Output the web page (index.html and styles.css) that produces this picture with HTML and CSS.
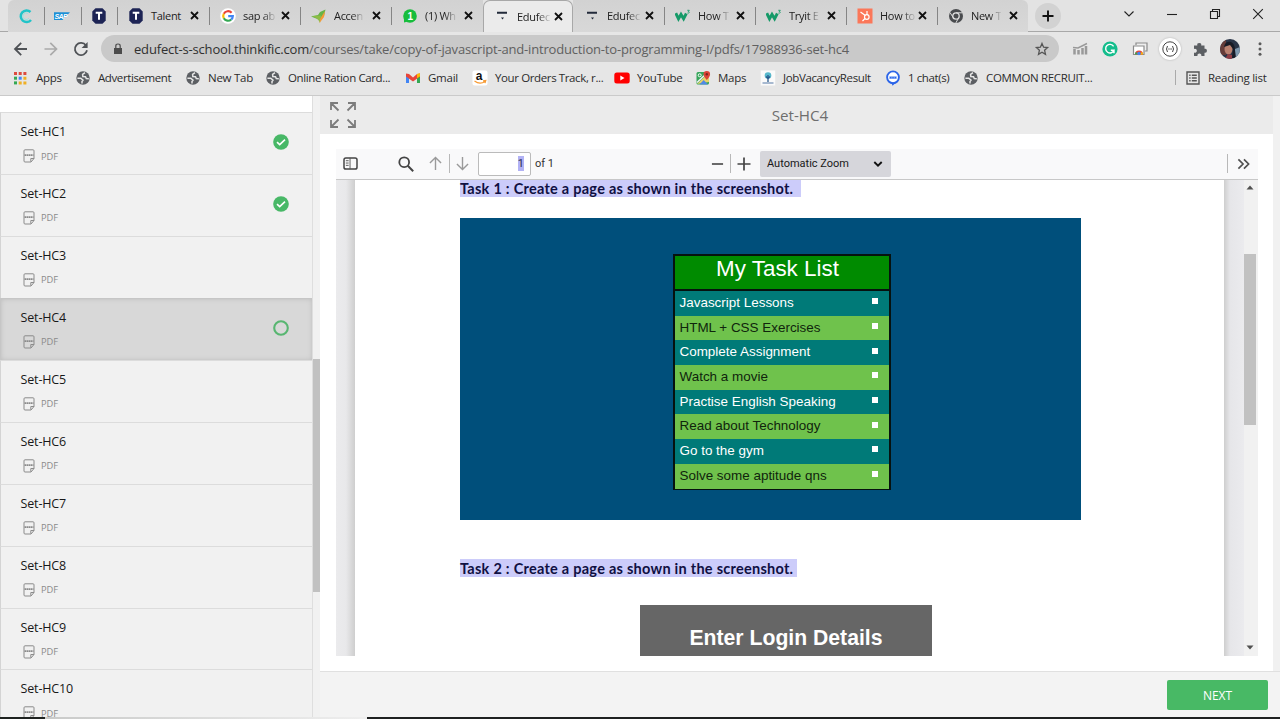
FILE: index.html
```html
<!DOCTYPE html>
<html lang="en">
<head>
<meta charset="utf-8">
<title>Set-HC4</title>
<link rel="stylesheet" href="styles.css">
</head>
<body>
<svg width="0" height="0" class="defs">
  <defs>
    <symbol id="x" viewBox="0 0 9 9"><path d="M1 1l7 7M8 1L1 8" stroke="#111" stroke-width="1.8" fill="none"/></symbol>
    <symbol id="globe" viewBox="0 0 16 16"><circle cx="8" cy="8" r="6.700" fill="#5c5f63"/><path d="M2.400 8.200h3.300l2.300 2-1 1.300v2M10 2.600L7.600 4.300l.2 2.300 2.700.2.800 1.800 2.500.2" stroke="#e6e6e6" stroke-width="1.500" fill="none"/></symbol>
    <symbol id="hex" viewBox="0 0 16 16"><path d="M4.500.300h7l3.200 3.200v9l-3.200 3.200h-7L1.300 12.500v-9z" fill="#1d2455"/><path d="M4.700 4.700h6.600M8 4.700v7" stroke="#fff" stroke-width="2" fill="none"/></symbol>
    <symbol id="think" viewBox="0 0 16 16"><path d="M3 3.800h10v2H3zM7 9.500h3l-1.500 2z" fill="#222a3a"/></symbol>
    <symbol id="w3" viewBox="0 0 16 16"><path d="M.8 5.200l2.700 5.600 2.500-4.400 2.600 4.400L11.300 5.500" stroke="#159a68" stroke-width="2.900" fill="none"/><path d="M12.300 2.300h2l-1 1.200c1.600 0 1.300 2-.9 1.600" stroke="#159a68" stroke-width=".9" fill="none"/></symbol>
    <symbol id="doc" viewBox="0 0 12 14"><path d="M2 .8h8q1 0 1 1V9.500L8 13H2q-1 0-1-1V1.800q0-1 1-1zM7.800 12.600V9.500H11" stroke="#8b8b8b" fill="none"/><path d="M1.500 6.200h9" stroke="#8b8b8b" stroke-width="1.800" stroke-dasharray="1.600 .4"/></symbol>
    <symbol id="done" viewBox="0 0 16 16"><circle cx="8" cy="8" r="7.800" fill="#48b867"/><path d="M4 8.200l2.700 2.500L12 5.600" stroke="#fff" stroke-width="1.600" fill="none"/></symbol>
  </defs>
</svg>
<div class="window">
  <header class="chrome">
    <div class="tabs">
      <div class="tab mini"><svg viewBox="0 0 16 16"><path d="M12.500 4A5.800 5.800 0 1 0 13 12" stroke="#21c4c8" stroke-width="2.500" fill="none"/><path d="M10 5.500A3.300 3.300 0 1 0 11 10" stroke="#9be3e2" stroke-width="1" fill="none"/></svg></div>
      <div class="tab mini"><svg viewBox="0 0 16 16"><path d="M0 4.200h16L8.500 12H0z" fill="#1c8fd6"/><text x=".4" y="10.500" class="sap">SAP</text></svg></div>
      <div class="tab mini"><svg viewBox="0 0 16 16"><use href="#hex"/></svg></div>
      <div class="tab"><svg><use href="#hex"/></svg><span class="whole">Talent</span><svg class="close"><use href="#x"/></svg></div>
      <div class="tab"><svg viewBox="0 0 16 16"><circle cx="8" cy="8" r="7.800" fill="#fff"/><g fill="none" stroke-width="2.200"><path d="M11.600 4.800A4.800 4.800 0 0 0 3.800 5.700" stroke="#e94235"/><path d="M3.800 5.700a4.800 4.800 0 0 0 0 4.600" stroke="#fabb05"/><path d="M3.800 10.300a4.800 4.800 0 0 0 7.400 1.200" stroke="#34a853"/><path d="M11.200 11.500A4.600 4.600 0 0 0 12.800 8.200H8.200" stroke="#4285f4"/></g></svg><span>sap ab</span><svg class="close"><use href="#x"/></svg></div>
      <div class="tab"><svg viewBox="0 0 16 16"><path d="M0 8.500L7 7l2-3 5.500-2.500L13 8l-4 4z" fill="#66b447"/><path d="M1 8l9-.5-1 7.500c-1-3-3-5-8-7z" fill="#8ebc45"/><path d="M14 3l-1 6-4.500 6 1-5z" fill="#f59a35"/></svg><span>Accen</span><svg class="close"><use href="#x"/></svg></div>
      <div class="tab"><svg viewBox="0 0 16 16"><circle cx="8" cy="8" r="6.800" fill="#16bd3c"/><path d="M2 10v4.500l4-1" fill="#16bd3c"/><text x="5.500" y="11.500" class="one">1</text></svg><span>(1) Wh</span><svg class="close"><use href="#x"/></svg></div>
      <div class="tab active"><svg><use href="#think"/></svg><span>Edufec</span><svg class="close"><use href="#x"/></svg></div>
      <div class="tab nosep"><svg><use href="#think"/></svg><span>Edufec</span><svg class="close"><use href="#x"/></svg></div>
      <div class="tab"><svg><use href="#w3"/></svg><span>How T</span><svg class="close"><use href="#x"/></svg></div>
      <div class="tab"><svg><use href="#w3"/></svg><span>Tryit E</span><svg class="close"><use href="#x"/></svg></div>
      <div class="tab"><svg viewBox="0 0 16 16"><path d="M.5.500h15v15H.5z" fill="#fb7759"/><g stroke="#fff" fill="none" stroke-width="1.200"><circle cx="9.800" cy="9" r="2.300"/><path d="M10 3v4M3.500 4l4.800 3.600M8 10.500L5.500 13"/></g></svg><span>How to</span><svg class="close"><use href="#x"/></svg></div>
      <div class="tab last"><svg viewBox="0 0 16 16"><circle cx="8" cy="8" r="7" fill="#494b4e"/><circle cx="8" cy="8" r="3.200" fill="#494b4e" stroke="#ddd" stroke-width="1.300"/><path d="M8 4.800h6.500M5.200 9.600L2 4.500M10.700 9.700L7.800 15" stroke="#ddd"/></svg><span>New T</span><svg class="close"><use href="#x"/></svg></div>
      <div class="plus"><svg viewBox="0 0 12 12"><path d="M6 .5v11M.5 6h11" stroke="#111" stroke-width="1.900"/></svg></div>
      <div class="controls">
        <svg viewBox="0 0 12 12"><path d="M1.500 3.500L6 8l4.500-4.500" /></svg>
        <svg viewBox="0 0 12 12"><path d="M1 6.500h10" /></svg>
        <svg viewBox="0 0 12 12"><path d="M1.500 3.500h7v7h-7zM3.500 3.500v-2h7v7h-2" /></svg>
        <svg viewBox="0 0 12 12"><path d="M1.200 1.200l9.600 9.600M10.800 1.200l-9.600 9.600" /></svg>
      </div>
    </div>
    <div class="toolbar">
      <div class="nav">
        <svg viewBox="0 0 16 16"><path d="M14 8H2M8.200 1.800L2 8l6.200 6.200" stroke="#4f5256" stroke-width="1.800" fill="none"/></svg>
        <svg viewBox="0 0 16 16"><path d="M1.500 8h12M7.300 1.800L13.500 8l-6.200 6.200" stroke="#aaa" stroke-width="1.700" fill="none"/></svg>
        <svg viewBox="0 0 16 16"><path d="M13 4.500A6.100 6.100 0 1 0 14 9.300" stroke="#4f5256" stroke-width="1.800" fill="none"/><path d="M14.600 1v6h-6z" fill="#4f5256"/></svg>
      </div>
      <div class="omnibox">
        <svg class="lock" viewBox="0 0 10 12"><path d="M1 5h8v6H1z" fill="#4b4b4b"/><path d="M2.800 5V3q0-2 2.200-2t2.200 2v2" stroke="#4b4b4b" stroke-width="1.200" fill="none"/></svg>
        <span class="url"><b>edufect-s-school.thinkific.com</b>/courses/take/copy-of-javascript-and-introduction-to-programming-I/pdfs/17988936-set-hc4</span>
        <svg class="star" viewBox="0 0 14 14"><path d="M7 1.500l1.600 3.700 4 .4-3 2.700.9 4L7 10.200l-3.500 2.100.9-4-3-2.700 4-.4z" stroke="#555" stroke-width="1.300" fill="none"/></svg>
      </div>
      <div class="ext">
        <svg viewBox="0 0 16 16"><path d="M2.500 8v5.500M6.500 9v4.500M10.500 7v6.500M14 5v8.500" stroke="#999" stroke-width="2.500"/><path d="M1 6.500l5 .5 9-4.500" stroke="#999" stroke-width="1.500" fill="none"/></svg>
        <svg viewBox="0 0 16 16"><circle cx="8" cy="8" r="7.600" fill="#14bd8c"/><path d="M11.600 5.300A4.300 4.300 0 1 0 12 9.200H8.800M12 9.200v3" stroke="#fff" stroke-width="1.400" fill="none"/></svg>
        <svg viewBox="0 0 16 16"><path d="M4 4V2h11v8h-2" stroke="#8b8b8b" stroke-width="1.200" fill="#eee"/><path d="M1.500 5h10.500v8.500H1.500z" stroke="#8b8b8b" stroke-width="1.200" fill="#fff"/><path d="M3 13.500a4 4 0 0 1 8 0z" fill="#e64b3c"/><path d="M3 13.500a4 4 0 0 1 1-2.700l2 2.700z" fill="#35a853"/><path d="M8 13.500l2-2.700a4 4 0 0 1 1 2.700z" fill="#fbbc05"/><circle cx="7" cy="12.500" r="1.700" fill="#4285f4"/></svg>
        <i class="halo"><svg viewBox="0 0 16 16"><circle cx="8" cy="8" r="7.200" stroke="#444" fill="none"/><path d="M5.500 5q-2 3 0 6M10.500 5q2 3 0 6" stroke="#444" fill="none"/><path d="M6.300 8h3.600" stroke="#444" stroke-dasharray="1 .3"/></svg></i>
        <svg viewBox="0 0 16 16"><path d="M2 4.500h3.300a2 2 0 1 1 3.900 0h3.300v3.300a2 2 0 1 1 0 3.900V15H9.300a2 2 0 1 0-3.800 0H2v-3.500a2 2 0 1 0 0-3.600z" fill="#5c5f63"/></svg>
        <svg class="avatar" viewBox="0 0 20 20"><defs><clipPath id="c"><circle cx="10" cy="10" r="10"/></clipPath></defs><g clip-path="url(#c)"><path d="M0 0h20v20H0z" fill="#293447"/><path d="M0 0h6v16H0z" fill="#653c39"/><path d="M15 10l5-2v12h-7z" fill="#7d98ae"/><ellipse cx="8.500" cy="10" rx="4" ry="5.500" fill="#b9806f"/><path d="M4 8Q5 2 11 3q4 2 4 8l1 8h-4l1-9-3-4z" fill="#171b26"/><path d="M5 20l3-5 4 1v4z" fill="#913d45"/></g></svg>
        <svg class="dots" viewBox="0 0 4 16"><g fill="#5a5a5a"><circle cx="2" cy="2.800" r="1.500"/><circle cx="2" cy="8" r="1.500"/><circle cx="2" cy="13.200" r="1.500"/></g></svg>
      </div>
    </div>
    <div class="bookmarks">
      <div class="bm"><svg viewBox="0 0 16 16"><path d="M2 2h3v3H2zM6.700 2h3v3h-3zM11.400 2h3v3h-3z" fill="#dd4b3e"/><path d="M2 6.700h3v3H2z" fill="#35a853"/><path d="M6.700 6.700h3v3h-3z" fill="#4285f4"/><path d="M11.400 6.700h3v3h-3zM6.700 11.400h3v3h-3zM11.400 11.400h3v3h-3z" fill="#efb025"/><path d="M2 11.400h3v3H2z" fill="#35a853"/></svg><span class="apps">Apps</span></div>
      <div class="bm"><svg><use href="#globe"/></svg><span class="adv">Advertisement</span></div>
      <div class="bm"><svg><use href="#globe"/></svg><span>New Tab</span></div>
      <div class="bm"><svg><use href="#globe"/></svg><span class="ration">Online Ration Card...</span></div>
      <div class="bm"><svg viewBox="0 0 16 16"><path d="M1 4v9h3V7.500z" fill="#4285f4"/><path d="M15 4v9h-3V7.500z" fill="#34a853"/><path d="M1 3.500L4 4l4 3.400L12 4l3-.5v3L8 11.500 1 6.500z" fill="#e8453a"/><path d="M12 4l3-.8v3l-3 2z" fill="#fbbc04"/></svg><span>Gmail</span></div>
      <div class="bm"><svg viewBox="0 0 16 16"><rect x=".5" y=".5" width="15" height="15" rx="2" fill="#fff"/><text x="3.700" y="10" class="ama">a</text><path d="M2.500 11q5.500 4 10.500.4M11 10.800l2.800-.3-.8 2.600" stroke="#f79b34" stroke-width="1.200" fill="none"/></svg><span class="orders">Your Orders Track, r...</span></div>
      <div class="bm"><svg viewBox="0 0 16 16"><rect x=".3" y="2.600" width="15.400" height="10.800" rx="2.500" fill="#f00"/><path d="M6.300 5.600v4.800L10.500 8z" fill="#fff"/></svg><span class="yt">YouTube</span></div>
      <div class="bm"><svg viewBox="0 0 16 16"><rect x="1.500" y="2" width="12.500" height="12.500" rx="1.500" fill="#36a65b"/><path d="M2 14L12.500 4 14 5.500V12z" fill="#e9d36b"/><path d="M4.500 14.500L8.700 10l4.300 4.500z" fill="#5089e6"/><path d="M2 12.500L12 3" stroke="#f2f2f2" stroke-width="1.500"/><path d="M11.800 10Q8.500 6.400 8.500 4.200a3.300 3.300 0 0 1 6.600 0q0 2.200-3.300 5.800z" fill="#dc4437"/><circle cx="11.800" cy="4.300" r="1.200" fill="#7a2720"/><circle cx="4.700" cy="5.300" r="1.500" stroke="#fff" fill="none"/></svg><span>Maps</span></div>
      <div class="bm"><svg viewBox="0 0 16 16"><path d="M.8.500h14.400v15H.8z" fill="#fafafa"/><circle cx="8" cy="5.500" r="3.300" fill="#57b8cc"/><path d="M8 5v7M6 6.500L8 8.500l2-2" stroke="#28598c" stroke-width="1.300" fill="none"/><path d="M2.500 13h11" stroke="#8ba3c2" stroke-width="1.500"/></svg><span class="job">JobVacancyResult</span></div>
      <div class="bm"><svg viewBox="0 0 16 16"><circle cx="8" cy="7.300" r="5.900" stroke="#2c65e8" stroke-width="1.900" fill="#fff"/><path d="M6.500 12.500h4.500l-3.500 3.300z" fill="#2c65e8"/><path d="M4.300 6.300h7.400v2.600H4.300z" fill="#75a0f5"/><path d="M5 7.600h1.300M7.400 7.600h1.300M9.800 7.600h1.300" stroke="#2c65e8" stroke-width="1.200"/></svg><span class="chat">1 chat(s)</span></div>
      <div class="bm"><svg><use href="#globe"/></svg><span class="common">COMMON RECRUIT...</span></div>
      <div class="bm reading"><svg viewBox="0 0 16 16"><path d="M2 2h12v12H2z" stroke="#555" stroke-width="1.400" fill="none"/><path d="M4.200 5.200h1.400M4.200 8h1.400M4.200 10.800h1.400M6.800 5.200h5M6.800 8h5M6.800 10.800h5" stroke="#555" stroke-width="1.400"/></svg><span>Reading list</span></div>
    </div>
  </header>
  <main class="body">
    <aside class="sidebar">
      <div class="list">
        <div class="lesson"><div><h3>Set-HC1</h3><p><svg><use href="#doc"/></svg>PDF</p></div><svg class="state"><use href="#done"/></svg></div>
        <div class="lesson"><div><h3>Set-HC2</h3><p><svg><use href="#doc"/></svg>PDF</p></div><svg class="state"><use href="#done"/></svg></div>
        <div class="lesson"><div><h3>Set-HC3</h3><p><svg><use href="#doc"/></svg>PDF</p></div></div>
        <div class="lesson current"><div><h3>Set-HC4</h3><p><svg><use href="#doc"/></svg>PDF</p></div><svg class="state" viewBox="0 0 16 16"><circle cx="8" cy="8" r="6.800" stroke="#58b671" stroke-width="2.100" fill="none"/></svg></div>
        <div class="lesson"><div><h3>Set-HC5</h3><p><svg><use href="#doc"/></svg>PDF</p></div></div>
        <div class="lesson"><div><h3>Set-HC6</h3><p><svg><use href="#doc"/></svg>PDF</p></div></div>
        <div class="lesson"><div><h3>Set-HC7</h3><p><svg><use href="#doc"/></svg>PDF</p></div></div>
        <div class="lesson"><div><h3>Set-HC8</h3><p><svg><use href="#doc"/></svg>PDF</p></div></div>
        <div class="lesson"><div><h3>Set-HC9</h3><p><svg><use href="#doc"/></svg>PDF</p></div></div>
        <div class="lesson"><div><h3>Set-HC10</h3><p><svg><use href="#doc"/></svg>PDF</p></div></div>
      </div>
      <div class="side-scroll"><i></i></div>
    </aside>
    <section class="content">
      <div class="stage">
        <div class="column">
          <div class="title"><svg viewBox="0 0 26 26"><path d="M8.500 8.500L1.500 1.500M1 8V1h7M17.500 8.500l7-7M18 1h7v7M8.500 17.500l-7 7M1 18v7h7M17.500 17.500l7 7M25 18v7h-7" stroke="#7c7c7c" stroke-width="1.800" fill="none"/></svg><h1>Set-HC4</h1></div>
          <div class="viewer">
            <div class="pdfbar">
              <svg class="panel" viewBox="0 0 16 14"><rect x="1" y="1" width="14" height="12" rx="2" stroke="#444" stroke-width="1.600" fill="none"/><path d="M7.500 1v12M3 4h3M3 6.500h3M3 9h3" stroke="#555" fill="none"/></svg>
              <svg class="search" viewBox="0 0 16 16"><circle cx="6.200" cy="6.200" r="4.900" stroke="#444" stroke-width="1.800" fill="none"/><path d="M9.800 9.800l5.400 5.400" stroke="#444" stroke-width="2"/></svg>
              <svg class="up" viewBox="0 0 14 16"><path d="M7 15V1.500M1 7.500l6-6 6 6" stroke="#9a9a9a" stroke-width="1.500" fill="none"/></svg>
              <i class="vr"></i>
              <svg class="down" viewBox="0 0 14 16"><path d="M7 1v13.500M1 8.500l6 6 6-6" stroke="#9a9a9a" stroke-width="1.500" fill="none"/></svg>
              <div class="pageno"><mark>1</mark></div>
              <span class="of">of 1</span>
              <svg class="minus" viewBox="0 0 14 14"><path d="M1 7h12" stroke="#444" stroke-width="1.700"/></svg>
              <i class="vr"></i>
              <svg class="add" viewBox="0 0 14 14"><path d="M.5 7h13M7 .5v13" stroke="#444" stroke-width="1.700"/></svg>
              <div class="zoomsel"><span>Automatic Zoom</span><svg viewBox="0 0 10 8"><path d="M1.300 2L5 5.600 8.700 2" stroke="#111" stroke-width="1.900" fill="none"/></svg></div>
              <i class="vr far"></i>
              <svg class="more" viewBox="0 0 14 12"><path d="M1.500 1l5 5-5 5M7.500 1l5 5-5 5" stroke="#505050" stroke-width="1.800" fill="none"/></svg>
            </div>
            <div class="pdf">
              <div class="sheet">
                <div class="task one-t"><span>Task 1 : Create a page as shown in the screenshot.</span></div>
                <div class="shot">
                  <div class="tasks">
                    <h2>My Task List</h2>
                    <div class="row">Javascript Lessons<i></i></div>
                    <div class="row">HTML + CSS Exercises<i></i></div>
                    <div class="row">Complete Assignment<i></i></div>
                    <div class="row">Watch a movie<i></i></div>
                    <div class="row">Practise English Speaking<i></i></div>
                    <div class="row">Read about Technology<i></i></div>
                    <div class="row">Go to the gym<i></i></div>
                    <div class="row">Solve some aptitude qns<i></i></div>
                  </div>
                </div>
                <div class="task two-t"><span>Task 2 : Create a page as shown in the screenshot.</span></div>
                <div class="login">Enter Login Details</div>
              </div>
              <div class="pdf-scroll"><svg viewBox="0 0 8 5"><path d="M.5 4.500L4 .5l3.500 4z" fill="#505050"/></svg><i></i><svg viewBox="0 0 8 5"><path d="M.5.500h7L4 4.500z" fill="#505050"/></svg></div>
            </div>
          </div>
        </div>
        <div class="gutter"></div>
      </div>
      <footer class="foot"><button>NEXT</button></footer>
    </section>
  </main>
  <div class="edge"></div>
</div>
</body>
</html>
```
FILE: styles.css
```css
* { box-sizing: border-box; }
body { margin: 0; font-family: "Open Sans", "Noto Sans", sans-serif; overflow: hidden; }
h1, h2, h3, p { margin: 0; font-weight: 400; }
svg { display: block; flex: none; overflow: visible; }
.defs { position: absolute; }
.window { width: 1280px; height: 719px; display: flex; flex-direction: column; background: #fff; overflow: hidden; }

/* Browser frame */
.chrome { height: 96px; flex: none; background: #e6e6e6; border-bottom: 1px solid #cacaca; }
.tabs { height: 32px; display: grid; grid-template-columns: 36px 37px 36px 92px 91px 91px 92px 90px 91px 91px 91px 91px 91px 51px 1fr; padding-left: 8px; background: #e3e3e3; border-bottom: 1px solid #a8a8a8; }
.tab { display: flex; align-items: center; padding: 0 10px 1px 11px; background: linear-gradient(#d2d2d2, #d8d8d8); font-size: 11px; letter-spacing: -.3px; color: #222; position: relative; }
.tab:first-child { border-radius: 6px 0 0 0; }
.tab.last { border-radius: 0 6px 0 0; }
.tab svg { width: 16px; height: 16px; }
.tab.mini { padding: 0 0 0 10px; }
.tab:not(:first-child):not(.active):not(.nosep)::before { content: ""; position: absolute; left: 0; top: 7px; width: 1px; height: 18px; background: #858585; }
.tab span { margin-left: 7px; white-space: nowrap; -webkit-mask-image: linear-gradient(90deg, #000 62%, transparent 105%); mask-image: linear-gradient(90deg, #000 62%, transparent 105%); }
.tab span.whole { -webkit-mask-image: none; mask-image: none; }
.tab svg.close { width: 9px; height: 9px; margin-left: auto; }
.tab.active { background: #ebebeb; height: 32px; border: 1px solid #a8a8a8; border-bottom: 0; border-radius: 7px 7px 0 0; padding: 0 9px 1px 10px; }
.sap { font: italic bold 7px "Liberation Sans", sans-serif; fill: #fff; letter-spacing: -.5px; }
.one { font: bold 10px "Liberation Sans", sans-serif; fill: #fff; }
.plus { width: 26px; height: 26px; margin: 3px 0 0 7px; border-radius: 50%; background: #d2d2d2; display: flex; align-items: center; justify-content: center; }
.plus svg { width: 12px; height: 12px; }
.controls { display: flex; justify-content: space-between; align-items: center; padding: 0 16px 5px 44px; }
.controls svg { width: 12px; height: 12px; fill: none; stroke: #222; stroke-width: 1.100; }
.toolbar { height: 33px; display: flex; align-items: center; }
.nav { width: 101px; padding-left: 13px; display: flex; gap: 14px; flex: none; }
.nav svg { width: 16px; height: 16px; }
.omnibox { width: 958px; height: 27px; border-radius: 14px; background: #c9c9c9; display: flex; align-items: center; padding: 0 10px 0 12px; }
.lock { width: 10px; height: 12px; }
.url { margin-left: 11px; font-size: 13px; letter-spacing: -.18px; color: #606060; white-space: nowrap; }
.url b { font-weight: 400; color: #303030; }
.star { width: 14px; height: 14px; margin-left: auto; }
.ext { display: flex; align-items: center; padding-left: 13px; gap: 14px; }
.ext svg { width: 16px; height: 16px; }
.halo { width: 22px; height: 22px; border-radius: 50%; background: #fff; box-shadow: 0 0 2px #aaa; display: flex; align-items: center; justify-content: center; margin: 0 -3px; }
.ext svg.avatar { width: 20px; height: 20px; margin: 0 -2px; }
.ext svg.dots { width: 4px; margin-left: 6px; }
.bookmarks { height: 29px; padding: 0 0 4px 12px; display: grid; grid-template-columns: 63px 110px 80px 140px 67px 142px 81px 65px 125px 78px 212px 1fr; font-size: 11.500px; color: #2c2c2c; align-items: center; }
.bm { display: flex; align-items: center; white-space: nowrap; letter-spacing: -.25px; }
.bm svg { width: 16px; height: 16px; margin-right: 7px; }
.adv { letter-spacing: -.4px; }
.apps { letter-spacing: -.3px; margin-left: 1px; }
.ration, .orders { letter-spacing: -.38px; }
.job { letter-spacing: -.37px; }
.common { letter-spacing: -.35px; }
.chat { letter-spacing: -.4px; }
.ama { font: bold 12px "Liberation Sans", sans-serif; fill: #111; }
.reading { height: 15px; border-left: 1px solid #aaa; padding-left: 9px; }

/* Course navigation */
.body { height: 621px; display: flex; }
.sidebar { width: 320px; display: flex; flex: none; }
.list { width: 312px; padding-top: 16px; height: 621px; overflow: hidden; }
.lesson { height: 61.940px; padding: 9px 23px 0 19px; display: flex; justify-content: space-between; background: #f1f1f1; border-top: 1px solid #dcdcdc; border-left: 1px solid #d4d4d4; }
.lesson h3 { font-size: 12.500px; line-height: 20px; letter-spacing: -.15px; color: #181818; padding-left: .5px; }
.lesson p { display: flex; align-items: center; margin-top: 6px; height: 16px; font-size: 9.300px; color: #8a8a8a; padding-left: 3px; }
.lesson p svg { width: 12px; height: 14px; margin-right: 6px; }
.state { width: 16px; height: 16px; margin-top: 12px; }
.current { background: #d8d8d8; border-color: #c6c6c6; box-shadow: inset 0 0 5px #bdbdbd; }
.side-scroll { width: 8px; border-left: 1px solid #dedede; background: #f1f1f1; padding-top: 263px; }
.side-scroll i { display: block; height: 233px; background: #c1c1c1; }

/* Lesson content */
.content { flex: 1; display: flex; flex-direction: column; }
.stage { height: 575px; display: flex; }
.column { flex: 1; background: #fff; }
.gutter { width: 7px; background: #f1f1f1; }
.title { height: 38px; background: #ebebeb; display: flex; align-items: center; padding-left: 10px; }
.title svg { width: 26px; height: 26px; }
.title h1 { flex: 1; text-align: center; font-size: 15.200px; line-height: 20px; color: #6e6e6e; padding-right: 29px; }
.viewer { width: 922px; margin: 15px 0 0 16px; }
.pdfbar { height: 31px; padding-bottom: 1px; display: flex; align-items: center; background: #f9f9fa; border-bottom: 1px solid #c8c8c8; font: 11px Roboto, sans-serif; color: #333; }
.panel { width: 15px; height: 13px; margin-left: 7px; }
.search { width: 16px; height: 16px; margin-left: 40px; }
.up { width: 13px; height: 15px; margin: 0 7px 0 15px; }
.down { width: 13px; height: 15px; margin-left: 6px; }
.vr { width: 1px; height: 19px; background: #b8b8b8; }
.pageno { width: 53px; height: 24px; margin-left: 9px; background: #fff; border: 1px solid #bbb; border-radius: 2px; display: flex; align-items: center; justify-content: flex-end; padding-right: 6px; }
.pageno mark { background: #b2b2f5; color: #303050; line-height: 15px; }
.of { margin-left: 4px; width: 176px; }
.minus { width: 13px; height: 14px; margin-right: 6px; }
.add { width: 14px; height: 14px; margin-left: 6px; }
.zoomsel { width: 131px; height: 26px; background: #d6d6db; border-radius: 2px; margin-left: 9px; padding: 0 8px 0 7px; display: flex; align-items: center; justify-content: space-between; color: #181818; }
.zoomsel svg { width: 10px; height: 8px; }
.far { margin-left: 336px; }
.more { width: 13px; height: 12px; margin-left: 9px; }
.pdf { height: 476px; display: flex; overflow: hidden; background: linear-gradient(90deg, #ebebed 0, #e8e8ea 10px, #cecece 19px, #cecece 888px, #e6e6e9 894px, #ebebee 908px); padding-left: 19px; justify-content: space-between; }
.sheet { width: 869px; background: #fff; padding-left: 105px; }
.task { font: bold 14.500px Lato, "Open Sans", sans-serif; letter-spacing: .26px; color: #101042; white-space: nowrap; }
.task span { display: block; background: #ccccfa; }
.one-t span { width: 341px; height: 17px; line-height: 17px; }
.two-t { margin-top: 39px; }
.two-t span { width: 337px; height: 18px; line-height: 19px; }
.shot { margin-top: 21px; width: 621px; height: 302px; background: #004f7b; padding: 36px 0 0 213px; }
.tasks { width: 218px; height: 236px; border: 2px solid #06120f; font-family: "Liberation Sans", Arial, sans-serif; }
.tasks h2 { height: 35px; background: #008b00; color: #fff; font-size: 22.400px; line-height: 26px; text-align: center; padding-right: 9px; border-bottom: 2px solid #06120f; }
.row { height: 24.700px; display: flex; align-items: center; justify-content: space-between; padding: 0 11px 2px 4.500px; font-size: 13.450px; background: #6fc24c; color: #10250c; }
.row:nth-child(even) { background: #007a78; color: #fff; }
.row i { width: 6px; height: 6px; background: #fff; margin-bottom: 2px; }
.login { width: 292px; height: 52px; margin: 28px 0 0 180px; background: #666; color: #fff; text-align: center; font: bold 21.200px/66px "Liberation Sans", Arial, sans-serif; overflow: hidden; }
.pdf-scroll { width: 14px; background: #f1f1f1; display: flex; flex-direction: column; align-items: center; padding: 5px 2px 6px 0; }
.pdf-scroll svg { width: 8px; height: 5px; }
.pdf-scroll i { width: 12px; height: 171px; background: #c1c1c1; margin: 64px 0 auto; }
.foot { height: 46px; background: #f3f3f3; border-top: 1px solid #e0e0e0; display: flex; justify-content: flex-end; padding: 8px 12px 0 0; }
.foot button { width: 101px; height: 30px; background: #48b965; border: 0; border-radius: 2px; color: #fff; font: 12px "Open Sans", sans-serif; padding: 0; }
.edge { height: 2px; flex: none; background: linear-gradient(90deg, #1e2220 45px, #c9cac9 45px, #eee 367px, #1e2020 367px); }
```
